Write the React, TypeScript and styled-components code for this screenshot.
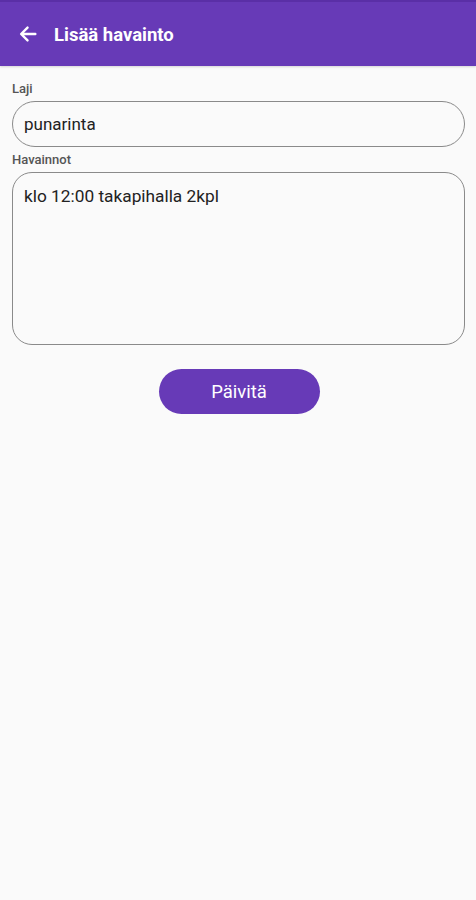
import { styled, createGlobalStyle } from 'styled-components';

const GlobalStyle = createGlobalStyle`
  html, body {
    margin: 0;
    padding: 0;
    background: #fafafa;
    font-family: Roboto, "Liberation Sans", sans-serif;
  }
`;

const BackIcon = () => (
  <svg width="22" height="22" viewBox="0 0 24 24" fill="none">
    <path
      d="M20 12H5M11.5 5L4.5 12l7 7"
      stroke="#ffffff"
      strokeWidth="2.6"
      strokeLinecap="round"
      strokeLinejoin="round"
    />
  </svg>
);

const App = () => {
  return (
    <Styled_Page.Container>
      <GlobalStyle />
      <Styled_Page.Header>
        <Styled_Page.Back>
          <BackIcon />
        </Styled_Page.Back>
        <Styled_Page.Title>Lisää havainto</Styled_Page.Title>
      </Styled_Page.Header>
      <Styled_Page.Form>
        <Styled_Page.Label>Laji</Styled_Page.Label>
        <Styled_Page.Input>punarinta</Styled_Page.Input>
        <Styled_Page.Label $top={5}>Havainnot</Styled_Page.Label>
        <Styled_Page.TextArea>klo 12:00 takapihalla 2kpl</Styled_Page.TextArea>
        <Styled_Page.ButtonRow>
          <Styled_Page.Button>Päivitä</Styled_Page.Button>
        </Styled_Page.ButtonRow>
      </Styled_Page.Form>
    </Styled_Page.Container>
  );
};

export default App;

const Styled_Page = {
  Container: styled.div`
    width: 476px;
    min-height: 900px;
    background: #fafafa;
  `,
  Header: styled.header`
    height: 66px;
    box-sizing: border-box;
    background: #673ab7;
    border-top: 2px solid #5a2fa6;
    display: flex;
    align-items: center;
    padding-left: 16px;
    box-shadow: 0 1px 2px rgba(0, 0, 0, 0.15);
  `,
  Back: styled.div`
    width: 24px;
    height: 24px;
    display: flex;
    align-items: center;
    justify-content: center;
  `,
  Title: styled.h1`
    margin: 2px 0 0 14px;
    color: #ffffff;
    font-size: 18.5px;
    font-weight: 700;
  `,
  Form: styled.div`
    display: flex;
    flex-direction: column;
    padding: 15px 11px 0 12px;
  `,
  Label: styled.label<{ $top?: number }>`
    font-size: 13px;
    color: #555555;
    font-weight: 500;
    margin-top: ${(p) => p.$top ?? 0}px;
    margin-bottom: 5px;
    line-height: 15px;
  `,
  Input: styled.div`
    height: 46px;
    box-sizing: border-box;
    border: 1px solid #8a8a8a;
    border-radius: 23px;
    display: flex;
    align-items: center;
    padding-left: 11px;
    font-size: 17px;
    color: #222222;
  `,
  TextArea: styled.div`
    height: 173px;
    box-sizing: border-box;
    border: 1px solid #8a8a8a;
    border-radius: 20px;
    padding: 13px 11px;
    font-size: 17.3px;
    color: #222222;
    line-height: 20px;
  `,
  ButtonRow: styled.div`
    display: flex;
    justify-content: center;
    margin-top: 24px;
  `,
  Button: styled.button`
    width: 161px;
    height: 45px;
    border: none;
    border-radius: 23px;
    background: #673ab7;
    color: #ffffff;
    font-family: Roboto, "Liberation Sans", sans-serif;
    font-size: 18.5px;
    font-weight: 400;
    margin-left: 1px;
  `,
};
